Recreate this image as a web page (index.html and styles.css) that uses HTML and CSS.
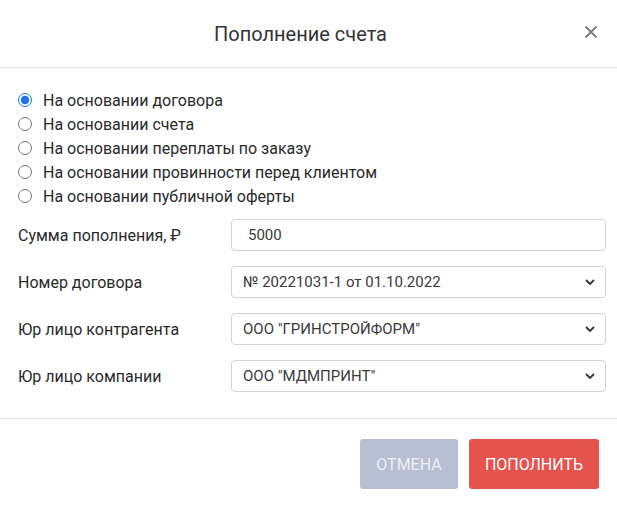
FILE: index.html
```html
<!DOCTYPE html>
<html lang="ru">
<head>
<meta charset="utf-8">
<title>Пополнение счета</title>
<link rel="stylesheet" href="styles.css">
</head>
<body>
<div class="modal">
  <div class="modal-header">
    <h1 class="modal-title">Пополнение счета</h1>
    <button class="close-btn" aria-label="Закрыть">
      <svg width="14" height="14" viewBox="0 0 14 14"><path d="M1.5 1.5 L12.5 12.5 M12.5 1.5 L1.5 12.5" stroke="#7a7a7a" stroke-width="1.8" fill="none"/></svg>
    </button>
  </div>
  <div class="modal-body">
    <div class="radio-group">
      <label class="radio"><input type="radio" name="basis" checked><span>На основании договора</span></label>
      <label class="radio"><input type="radio" name="basis"><span>На основании счета</span></label>
      <label class="radio"><input type="radio" name="basis"><span>На основании переплаты по заказу</span></label>
      <label class="radio"><input type="radio" name="basis"><span>На основании провинности перед клиентом</span></label>
      <label class="radio"><input type="radio" name="basis"><span>На основании публичной оферты</span></label>
    </div>
    <div class="form-row">
      <label class="form-label">Сумма пополнения, ₽</label>
      <div class="field input-field">5000</div>
    </div>
    <div class="form-row">
      <label class="form-label">Номер договора</label>
      <div class="field select-field"><span>№ 20221031-1 от 01.10.2022</span><svg class="chev" width="10" height="6" viewBox="0 0 10 6"><path d="M1 1 L5 5 L9 1" stroke="#333" stroke-width="1.8" fill="none"/></svg></div>
    </div>
    <div class="form-row">
      <label class="form-label">Юр лицо контрагента</label>
      <div class="field select-field"><span>ООО "ГРИНСТРОЙФОРМ"</span><svg class="chev" width="10" height="6" viewBox="0 0 10 6"><path d="M1 1 L5 5 L9 1" stroke="#333" stroke-width="1.8" fill="none"/></svg></div>
    </div>
    <div class="form-row">
      <label class="form-label">Юр лицо компании</label>
      <div class="field select-field"><span>ООО "МДМПРИНТ"</span><svg class="chev" width="10" height="6" viewBox="0 0 10 6"><path d="M1 1 L5 5 L9 1" stroke="#333" stroke-width="1.8" fill="none"/></svg></div>
    </div>
  </div>
  <div class="modal-footer">
    <button class="btn btn-cancel">ОТМЕНА</button>
    <button class="btn btn-primary">ПОПОЛНИТЬ</button>
  </div>
</div>
</body>
</html>
```
FILE: styles.css
```css
* { box-sizing: border-box; }
body {
  margin: 0;
  background: #fff;
  font-family: Roboto, "Liberation Sans", Arial, sans-serif;
  color: #222;
}
.modal {
  width: 617px;
  height: 506px;
  background: #fff;
}
.modal-header {
  height: 68px;
  border-bottom: 1px solid #e6e6e6;
  display: flex;
  align-items: center;
  justify-content: center;
  padding-right: 16px;
  position: relative;
}
.modal-title {
  margin: 0;
  font-size: 20px;
  font-weight: 400;
  color: #333;
}
.close-btn {
  position: absolute;
  right: 18px;
  top: 24px;
  width: 16px;
  height: 16px;
  padding: 0;
  border: 0;
  background: none;
  display: flex;
  align-items: center;
  justify-content: center;
}
.modal-body {
  padding: 20px 11px 0 18px;
  height: 351px;
  border-bottom: 1px solid #e6e6e6;
}
.radio-group {
  display: flex;
  flex-direction: column;
  margin-bottom: 11px;
}
.radio {
  display: flex;
  align-items: center;
  height: 24px;
  font-size: 16px;
  color: #2a2a2a;
}
.radio input {
  margin: 0 11px 0 0;
  width: 14px;
  height: 14px;
  accent-color: #1a73e8;
}
.form-row {
  display: flex;
  align-items: center;
  height: 32px;
  margin-bottom: 15px;
}
.form-label {
  width: 213px;
  font-size: 16px;
  color: #2a2a2a;
}
.field {
  flex: 1;
  height: 32px;
  border: 1px solid #cfd3d8;
  border-radius: 4px;
  display: flex;
  align-items: center;
  color: #3a3a3a;
}
.input-field {
  padding-left: 16px;
  font-size: 15px;
}
.select-field {
  padding: 0 10px 0 11px;
  font-size: 15px;
  justify-content: space-between;
}
.modal-footer {
  display: flex;
  justify-content: flex-end;
  gap: 11px;
  padding: 20px 18px 0 0;
}
.btn {
  height: 50px;
  border: 0;
  border-radius: 3px;
  font-family: Roboto, "Liberation Sans", Arial, sans-serif;
  font-size: 16px;
  color: #fff;
  padding: 0;
}
.btn-cancel {
  width: 98px;
  background: #b8bfd3;
  color: #eef0f6;
}
.btn-primary {
  width: 130px;
  background: #e5534d;
}
```
